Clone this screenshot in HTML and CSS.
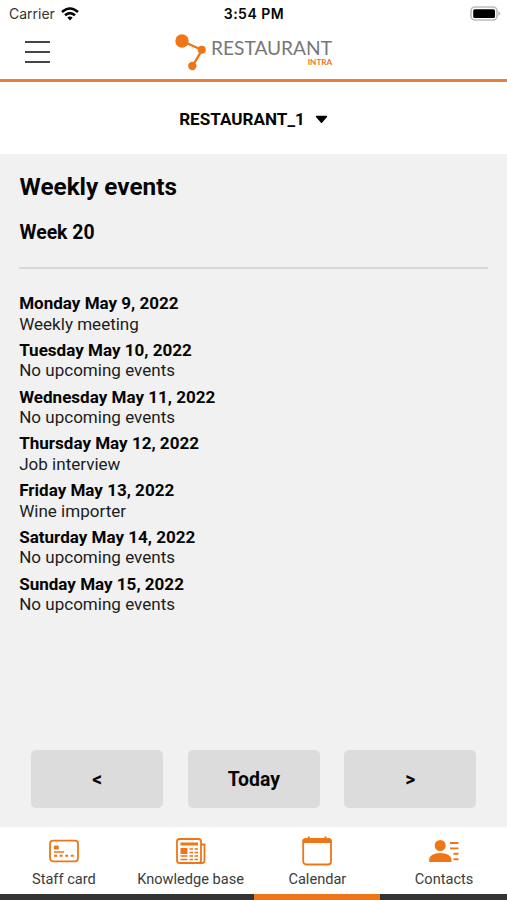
FILE: index.html
```html
<!DOCTYPE html>
<html lang="en">
<head>
    <meta charset="UTF-8">
    <meta name="viewport" content="width=device-width, initial-scale=1.0">
    <title>Restaurant Intra</title>
    <link rel="stylesheet" href="styles.css">
</head>
<body>
    <div class="statusbar">
        <div class="carrier">
            <span>Carrier</span>
            <svg width="18" height="14" viewBox="0 0 18 14" fill="none" stroke="#000" stroke-width="2.6">
                <path d="M1 5 Q9 -2 17 5"/>
                <path d="M4 8.3 Q9 4 14 8.3"/>
                <path d="M6.3 10.6 Q9 8.4 11.7 10.6 L9 13.5 Z" fill="#000" stroke="none"/>
            </svg>
        </div>
        <span class="time">3:54 PM</span>
        <svg class="battery" width="31" height="16" viewBox="0 0 31 16">
            <rect x="1" y="1" width="26" height="13" rx="4" fill="#fff" stroke="#bdbdbd" stroke-width="1.6"/>
            <rect x="3.2" y="3.2" width="21.8" height="8.8" rx="1.5" fill="#000"/>
            <path d="M28.3 5.3 Q30.5 6 30.5 7.5 Q30.5 9 28.3 9.7 Z" fill="#bdbdbd"/>
        </svg>
    </div>

    <header class="header">
        <button class="menu" aria-label="Menu">
            <span></span>
            <span></span>
            <span></span>
        </button>
        <svg class="logo" width="160" height="40" viewBox="0 0 160 40">
            <path d="M8 9 L28 18 L18.5 34" fill="none" stroke="#ee7618" stroke-width="2.4"/>
            <circle cx="8" cy="9" r="6.7" fill="#ee7618"/>
            <circle cx="27.8" cy="17.8" r="4" fill="#ee7618"/>
            <circle cx="18.3" cy="34" r="4.2" fill="#ee7618"/>
            <text class="logo-name" x="37" y="22.8" textLength="121" lengthAdjust="spacingAndGlyphs">RESTAURANT</text>
            <text class="logo-sub" x="133.7" y="32.8" textLength="24.5" lengthAdjust="spacingAndGlyphs">INTRA</text>
        </svg>
    </header>

    <div class="selector">
        <span>RESTAURANT_1</span>
        <svg width="13" height="9" viewBox="0 0 13 9">
            <path d="M1.5 1.5 H11.5 L6.5 7.3 Z" fill="#000" stroke="#000" stroke-width="1.4" stroke-linejoin="round"/>
        </svg>
    </div>

    <main class="content">
        <h1>Weekly events</h1>
        <h2>Week 20</h2>
        <hr>
        <dl class="events">
            <div><dt>Monday May 9, 2022</dt><dd>Weekly meeting</dd></div>
            <div><dt>Tuesday May 10, 2022</dt><dd>No upcoming events</dd></div>
            <div><dt>Wednesday May 11, 2022</dt><dd>No upcoming events</dd></div>
            <div><dt>Thursday May 12, 2022</dt><dd>Job interview</dd></div>
            <div><dt>Friday May 13, 2022</dt><dd>Wine importer</dd></div>
            <div><dt>Saturday May 14, 2022</dt><dd>No upcoming events</dd></div>
            <div><dt>Sunday May 15, 2022</dt><dd>No upcoming events</dd></div>
        </dl>
        <div class="week-nav">
            <button>&lt;</button>
            <button>Today</button>
            <button>&gt;</button>
        </div>
    </main>

    <nav class="tabs">
        <a class="tab">
            <svg width="32" height="32" viewBox="0 0 32 32" fill="none" stroke="#ee7618">
                <rect x="2" y="5.7" width="28" height="20.6" rx="3" stroke-width="1.8"/>
                <rect x="5.8" y="10.5" width="5" height="4" rx="1" fill="#ee7618" stroke="none"/>
                <path d="M6 17 H16" stroke-width="1.5"/>
                <path d="M6 20.8 H26" stroke-width="1.9" stroke-dasharray="3 2.6"/>
            </svg>
            <span>Staff card</span>
        </a>
        <a class="tab">
            <svg width="32" height="32" viewBox="0 0 32 32" fill="none" stroke="#ee7618">
                <rect x="2" y="4" width="24" height="24" rx="2.5" stroke-width="1.8"/>
                <path d="M26 9.5 H29.5 V25.5 Q29.5 28 27 28 H23" stroke-width="1.8"/>
                <path d="M5.5 9 H23" stroke-width="3"/>
                <rect x="5.5" y="13" width="7" height="6" fill="#ee7618" stroke="none"/>
                <path d="M14.5 14 H18 M19.5 14 H23 M14.5 17.5 H18 M19.5 17.5 H23 M5.5 21 H12.5 M14.5 21 H18 M19.5 21 H23 M5.5 24.5 H12.5 M14.5 24.5 H18 M19.5 24.5 H23" stroke-width="1.6"/>
            </svg>
            <span>Knowledge base</span>
        </a>
        <a class="tab active">
            <svg width="32" height="32" viewBox="0 0 32 32">
                <rect x="2.2" y="4" width="27.8" height="25.5" rx="3" fill="none" stroke="#ee7618" stroke-width="1.8"/>
                <path d="M1.4 8 V6 Q1.4 3.2 4.4 3.2 H6.8 V1.5 H8.8 V3.2 H23.4 V1.5 H25.4 V3.2 H27.9 Q30.8 3.2 30.8 6 V8 Z" fill="#ee7618"/>
            </svg>
            <span>Calendar</span>
        </a>
        <a class="tab">
            <svg width="32" height="32" viewBox="0 0 32 32" fill="#ee7618">
                <circle cx="12.2" cy="10.5" r="5.5"/>
                <path d="M1.2 27 V24.5 Q2 18 12.3 18 Q22.6 18 23.4 24.5 V27 Z"/>
                <path d="M22 8 H30.5 M22 13.4 H30.5 M25.5 18.7 H30.5 M25.5 24.2 H30.5" stroke="#ee7618" stroke-width="1.9"/>
            </svg>
            <span>Contacts</span>
        </a>
    </nav>
</body>
</html>
```
FILE: styles.css
```css
* {
    margin: 0;
    padding: 0;
    box-sizing: border-box;
}

body {
    font-family: Roboto, "Liberation Sans", sans-serif;
    height: 900px;
    display: flex;
    flex-direction: column;
    background-color: #fff;
    color: #050505;
    overflow: hidden;
}

button {
    border: none;
    background: none;
    font-family: inherit;
    color: inherit;
}

.statusbar {
    height: 27px;
    display: grid;
    grid-template-columns: 1fr auto 1fr;
    align-items: center;
    padding: 0 6px 0 9px;
    font-family: Inter, sans-serif;
    font-size: 14px;
}

.carrier {
    display: flex;
    align-items: center;
    gap: 6px;
    color: #333;
}

.time {
    margin-right: 2px;
    font-weight: 600;
    letter-spacing: 0.5px;
}

.battery {
    justify-self: end;
}

.header {
    height: 55px;
    display: grid;
    grid-template-columns: 1fr auto 1fr;
    padding: 0 25px;
    border-bottom: 3px solid #e5803a;
}

.menu {
    width: 25px;
    height: 22px;
    margin-top: 14px;
    display: flex;
    flex-direction: column;
    justify-content: space-between;
}

.menu span {
    height: 2px;
    background-color: #4a4545;
}

.logo {
    margin-top: 5px;
    overflow: visible;
}

.logo-name {
    font-family: Lato, sans-serif;
    font-size: 20px;
    fill: #777;
}

.logo-sub {
    font-family: Lato, sans-serif;
    font-size: 7px;
    font-weight: bold;
    fill: #ee7618;
}

.selector {
    height: 72px;
    display: flex;
    align-items: center;
    justify-content: center;
    gap: 10px;
    padding-top: 2px;
    font-size: 17.1px;
    font-weight: bold;
}

.content {
    flex: 1;
    display: flex;
    flex-direction: column;
    padding: 18px 19px 19px;
    background-color: #f1f1f1;
}

.content h1 {
    padding-left: 0.5px;
    font-size: 24.3px;
    line-height: 30px;
}

.content h2 {
    margin-top: 18px;
    padding-left: 0.5px;
    font-size: 19.4px;
    line-height: 25px;
}

.content hr {
    margin: 22px 0 24px;
    border: none;
    height: 2px;
    background-color: #d9d9d9;
}

.events {
    display: flex;
    flex-direction: column;
    gap: 5.8px;
    padding-left: 0.2px;
    font-size: 17.05px;
    line-height: 20.5px;
}

.events dt {
    font-weight: bold;
}

.events dd {
    color: #1c1c1c;
}

.week-nav {
    display: flex;
    gap: 24.5px;
    margin-top: auto;
    padding: 0 11.7px 0 12.3px;
}

.week-nav button {
    flex: 1;
    height: 58px;
    border-radius: 5px;
    background-color: #dcdcdc;
    font-size: 19.4px;
    font-weight: bold;
}

.tabs {
    height: 73px;
    display: grid;
    grid-template-columns: repeat(4, 1fr);
}

.tab {
    display: flex;
    flex-direction: column;
    align-items: center;
    gap: 2px;
    padding: 8px 0 0 1px;
    border-bottom: 6px solid #333;
    font-size: 14.6px;
    line-height: 21px;
    color: #3c3c3c;
    white-space: nowrap;
}

.tab.active {
    border-bottom-color: #ee7618;
}
```
